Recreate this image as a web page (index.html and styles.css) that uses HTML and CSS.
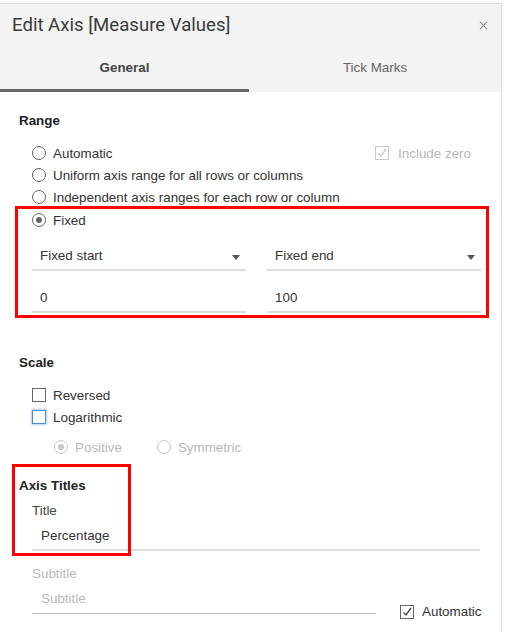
FILE: index.html
```html
<!DOCTYPE html>
<html>
<head>
<meta charset="utf-8">
<link rel="stylesheet" href="styles.css">
</head>
<body>
<div class="dialog">
  <div class="header">
    <div class="titlebar">
      <span class="title">Edit Axis [Measure Values]</span>
      <svg class="close" width="10" height="10" viewBox="0 0 10 10"><path d="M1 1 L9 9 M9 1 L1 9" stroke="#8a8a8a" stroke-width="1.2" fill="none"/></svg>
    </div>
    <div class="tabs">
      <div class="tab active">General</div>
      <div class="tab">Tick Marks</div>
    </div>
  </div>

  <div class="content">
    <div class="heading range-h">Range</div>
    <div class="options">
      <div class="row">
        <span class="radio"></span><span>Automatic</span>
        <span class="incl">
          <span class="check disabled"><svg width="12" height="12" viewBox="0 0 12 12"><path d="M2.5 6.5 L5 9 L10 2" stroke="#c4c4c4" stroke-width="1.3" fill="none"/></svg></span>
          <span class="muted">Include zero</span>
        </span>
      </div>
      <div class="row"><span class="radio"></span><span>Uniform axis range for all rows or columns</span></div>
      <div class="row"><span class="radio"></span><span>Independent axis ranges for each row or column</span></div>
    </div>
    <div class="redbox">
      <div class="row"><span class="radio on"></span><span>Fixed</span></div>
      <div class="fields">
        <div class="field select">Fixed start<span class="arrow"></span></div>
        <div class="field select">Fixed end<span class="arrow"></span></div>
      </div>
      <div class="fields second">
        <div class="field">0</div>
        <div class="field">100</div>
      </div>
    </div>

    <div class="heading scale-h">Scale</div>
    <div class="options">
      <div class="row"><span class="check"></span><span>Reversed</span></div>
      <div class="row"><span class="check focus"></span><span>Logarithmic</span></div>
      <div class="row sub">
        <span class="radio on disabled"></span><span class="muted">Positive</span>
        <span class="radio disabled sym"></span><span class="muted">Symmetric</span>
      </div>
    </div>

    <div class="axis-titles">
      <div class="heading">Axis Titles</div>
      <div class="label">Title</div>
      <div class="field wide">Percentage</div>
      <div class="label muted sublabel">Subtitle</div>
      <div class="subrow">
        <div class="field subfield muted">Subtitle</div>
        <span class="auto">
          <span class="check dark"><svg width="12" height="12" viewBox="0 0 12 12"><path d="M2.5 6.5 L5 9 L10 2" stroke="#444" stroke-width="1.3" fill="none"/></svg></span>
          <span>Automatic</span>
        </span>
      </div>
      <div class="redbox2"></div>
    </div>
  </div>
</div>
</body>
</html>
```

FILE: styles.css
```css
* { box-sizing: border-box; }
body {
  margin: 0;
  background: #fff;
  font-family: "Liberation Sans", Arial, sans-serif;
  font-size: 13.4px;
  color: #333;
}
.dialog {
  margin-top: 3px;
  width: 502px;
  height: 629px;
  border-top: 1px solid #dcdcdc;
  border-right: 1px solid #dcdcdc;
  background: #fff;
}
.header {
  background: #f3f3f3;
}
.titlebar {
  height: 40px;
  display: flex;
  align-items: flex-start;
  justify-content: space-between;
  padding: 9px 13px 0 12px;
}
.title {
  font-family: Roboto, "Liberation Sans", sans-serif;
  font-size: 18.6px;
  line-height: 24px;
  color: #3a3a3a;
}
.close { margin-top: 8px; width: 9px; height: 9px; }
.tabs {
  display: flex;
  height: 48px;
}
.tab {
  flex: 1;
  height: 48px;
  padding-top: 16px;
  line-height: 16px;
  text-align: center;
  color: #666;
  border-bottom: 3px solid transparent;
}
.tab.active {
  flex: 0 0 249px;
  font-weight: bold;
  color: #444;
  border-bottom-color: #666;
}
.content {
  padding: 21px 30px 0 19px;
}
.heading {
  font-weight: bold;
  line-height: 16px;
  color: #222;
}
.options { padding-left: 13px; margin-top: 13px; }
.row {
  height: 22px;
  display: flex;
  align-items: center;
}
.radio {
  width: 14px;
  height: 14px;
  border: 1.5px solid #666;
  border-radius: 50%;
  margin-right: 7px;
  display: inline-flex;
  align-items: center;
  justify-content: center;
  flex: none;
}
.radio.on::after {
  content: "";
  width: 6px;
  height: 6px;
  border-radius: 50%;
  background: #666;
}
.radio.disabled { border-color: #c4c4c4; }
.radio.disabled.on::after { background: #c4c4c4; }
.check {
  width: 14px;
  height: 14px;
  border: 1.5px solid #666;
  margin-right: 7px;
  display: inline-flex;
  align-items: center;
  justify-content: center;
  flex: none;
}
.check.disabled { border-color: #c8c8c8; margin-right: 9px; }
.check.focus {
  border-color: #4a90d9;
  box-shadow: 0 0 2px 1px rgba(120, 170, 230, 0.55);
}
.check.dark { border-color: #666; margin-right: 8px; }
.muted { color: #b8b8b8; }
.incl {
  margin-left: auto;
  display: flex;
  align-items: center;
}
.redbox {
  margin: -2px 0 0 -4px;
  width: 474px;
  border: 3px solid #f00;
  padding: 0 5px 2px 14px;
}
.fields {
  display: flex;
  gap: 21px;
  margin-top: 13px;
}
.fields.second { margin-top: 15px; }
.field {
  flex: 1;
  position: relative;
  padding: 4px 8px 5px;
  line-height: 16px;
  border-bottom: 2px solid #ddd;
}
.arrow {
  position: absolute;
  right: 6px;
  top: 11px;
  width: 0;
  height: 0;
  border-left: 4px solid transparent;
  border-right: 4px solid transparent;
  border-top: 5px solid #555;
}
.scale-h { margin-top: 37px; }
.row.sub { padding-left: 22px; margin-top: 8px; }
.radio.sym { margin-left: 35px; }
.axis-titles {
  position: relative;
  margin-top: 20px;
}
.label {
  margin: 9px 0 0 13px;
  line-height: 16px;
  color: #444;
}
.field.wide {
  margin: 5px 0 0 13px;
  width: 448px;
  padding-left: 9px;
  flex: none;
}
.sublabel { margin-top: 15px; color: #b8b8b8; }
.subrow {
  display: flex;
  align-items: flex-end;
  margin: 5px 0 0 13px;
}
.field.subfield {
  flex: none;
  width: 344px;
  padding: 4px 9px 6px;
  border-bottom: 1.5px solid #bbb;
}
.auto {
  display: flex;
  align-items: center;
  margin-left: 24px;
  margin-bottom: -5px;
}
.redbox2 {
  position: absolute;
  left: -7px;
  top: -14px;
  width: 119px;
  height: 92px;
  border: 3px solid #f00;
}
```
